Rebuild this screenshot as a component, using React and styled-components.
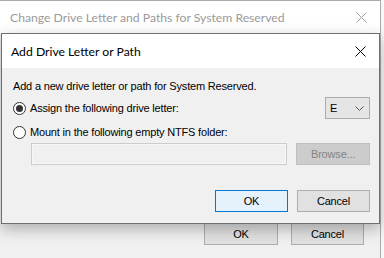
import React from "react";
import styled, { createGlobalStyle } from "styled-components";

const Global = createGlobalStyle`
  html, body {
    margin: 0;
    padding: 0;
    background: #ffffff;
  }
  * {
    box-sizing: border-box;
  }
`;

const Desktop = styled.div`
  position: relative;
  width: 384px;
  height: 258px;
  overflow: hidden;
  background: #f7f7f7;
  font-family: "Liberation Sans", Arial, sans-serif;
`;

const Window = styled.div`
  position: absolute;
  left: ${(p) => p.$left}px;
  top: ${(p) => p.$top}px;
  width: ${(p) => p.$width}px;
  height: ${(p) => p.$height}px;
  display: flex;
  flex-direction: column;
  background: #f0f0f0;
  border: 1px solid ${(p) => (p.$active ? "#6f6f6f" : "#aaaaaa")};
  box-shadow: ${(p) =>
    p.$active ? "0 5px 14px rgba(0, 0, 0, 0.28)" : "none"};
`;

const TitleBar = styled.div`
  display: flex;
  align-items: center;
  justify-content: space-between;
  height: ${(p) => p.$height}px;
  padding: 0 8px 0 ${(p) => p.$pad}px;
  background: #ffffff;
  flex-shrink: 0;
`;

const Title = styled.span`
  font-family: Lato, "Noto Sans", sans-serif;
  font-size: 12.2px;
  color: ${(p) => (p.$dim ? "#9a9a9a" : "#000000")};
  white-space: nowrap;
`;

const CloseButton = styled.span`
  display: flex;
  align-items: center;
  justify-content: center;
  width: 22px;
  height: 22px;
`;

const Client = styled.div`
  flex: 1;
  display: flex;
  flex-direction: column;
  padding: ${(p) => p.$padding};
  font-size: 11px;
  letter-spacing: -0.18px;
  color: #000000;
`;

const Text = styled.div`
  line-height: 14px;
  white-space: nowrap;
`;

const Row = styled.div`
  display: flex;
  align-items: center;
  height: 22px;
  margin-top: ${(p) => p.$mt || 0}px;
  padding-left: ${(p) => p.$indent || 0}px;
  gap: ${(p) => p.$gap || 0}px;
  justify-content: ${(p) => p.$justify || "flex-start"};
`;

const Radio = styled.label`
  display: flex;
  align-items: center;
  gap: 4px;
  flex: 1;
  white-space: nowrap;
`;

const RadioCircle = styled.span`
  position: relative;
  width: 13px;
  height: 13px;
  border-radius: 50%;
  border: 1px solid #333333;
  background: #ffffff;
  flex-shrink: 0;
  &::after {
    content: "";
    display: ${(p) => (p.$checked ? "block" : "none")};
    position: absolute;
    left: 2px;
    top: 2px;
    width: 7px;
    height: 7px;
    border-radius: 50%;
    background: #333333;
  }
`;

const Combo = styled.div`
  display: flex;
  align-items: center;
  justify-content: space-between;
  width: 45px;
  height: 22px;
  padding: 0 5px 0 4px;
  background: #e5e5e5;
  border: 1px solid #adadad;
  font-size: 11px;
`;

const Field = styled.div`
  width: 257px;
  height: 22px;
  background: #f0f0f0;
  border: 1px solid #cccccc;
  box-shadow: inset 0 0 0 1px #f7f7f7;
`;

const Button = styled.div`
  display: flex;
  align-items: center;
  justify-content: center;
  width: ${(p) => p.$width || 73}px;
  height: 22px;
  font-size: 11px;
  color: ${(p) => (p.$disabled ? "#838383" : "#000000")};
  background: ${(p) =>
    p.$disabled ? "#cccccc" : p.$default ? "#e5f1fb" : "#e1e1e1"};
  border: 1px solid
    ${(p) => (p.$disabled ? "#bfbfbf" : p.$default ? "#0078d7" : "#adadad")};
`;

const Cross = ({ color }) => (
  <svg width="11" height="11" viewBox="0 0 11 11">
    <path d="M0.5 0.5 L10.5 10.5 M10.5 0.5 L0.5 10.5" stroke={color} strokeWidth="1" fill="none" />
  </svg>
);

const Chevron = () => (
  <svg width="9" height="5" viewBox="0 0 9 5">
    <path d="M0.5 0.5 L4.5 4.5 L8.5 0.5" stroke="#555555" strokeWidth="1" fill="none" />
  </svg>
);

export default function App() {
  return (
    <>
      <Global />
      <Desktop>
        <Window $left={-20} $top={0} $width={401} $height={270}>
          <TitleBar $height={33} $pad={29}>
            <Title $dim>Change Drive Letter and Paths for System Reserved</Title>
            <CloseButton>
              <Cross color="#a0a0a0" />
            </CloseButton>
          </TitleBar>
          <Client $padding="189px 16px 0 0">
            <Row $gap={13} $justify="flex-end">
              <Button $width={74}>OK</Button>
              <Button $width={73}>Cancel</Button>
            </Row>
          </Client>
        </Window>

        <Window $active $left={1} $top={33} $width={379} $height={191}>
          <TitleBar $height={34} $pad={9}>
            <Title>Add Drive Letter or Path</Title>
            <CloseButton>
              <Cross color="#000000" />
            </CloseButton>
          </TitleBar>
          <Client $padding="11px 9px 0 11px">
            <Text>Add a new drive letter or path for System Reserved.</Text>
            <Row $mt={4}>
              <Radio>
                <RadioCircle $checked />
                Assign the following drive letter:
              </Radio>
              <Combo>
                E
                <Chevron />
              </Combo>
            </Row>
            <Row $mt={2}>
              <Radio>
                <RadioCircle />
                Mount in the following empty NTFS folder:
              </Radio>
            </Row>
            <Row $indent={18} $gap={9}>
              <Field />
              <Button $disabled $width={74}>
                Browse...
              </Button>
            </Row>
            <Row $mt={25} $gap={9} $justify="flex-end">
              <Button $default>OK</Button>
              <Button>Cancel</Button>
            </Row>
          </Client>
        </Window>
      </Desktop>
    </>
  );
}
